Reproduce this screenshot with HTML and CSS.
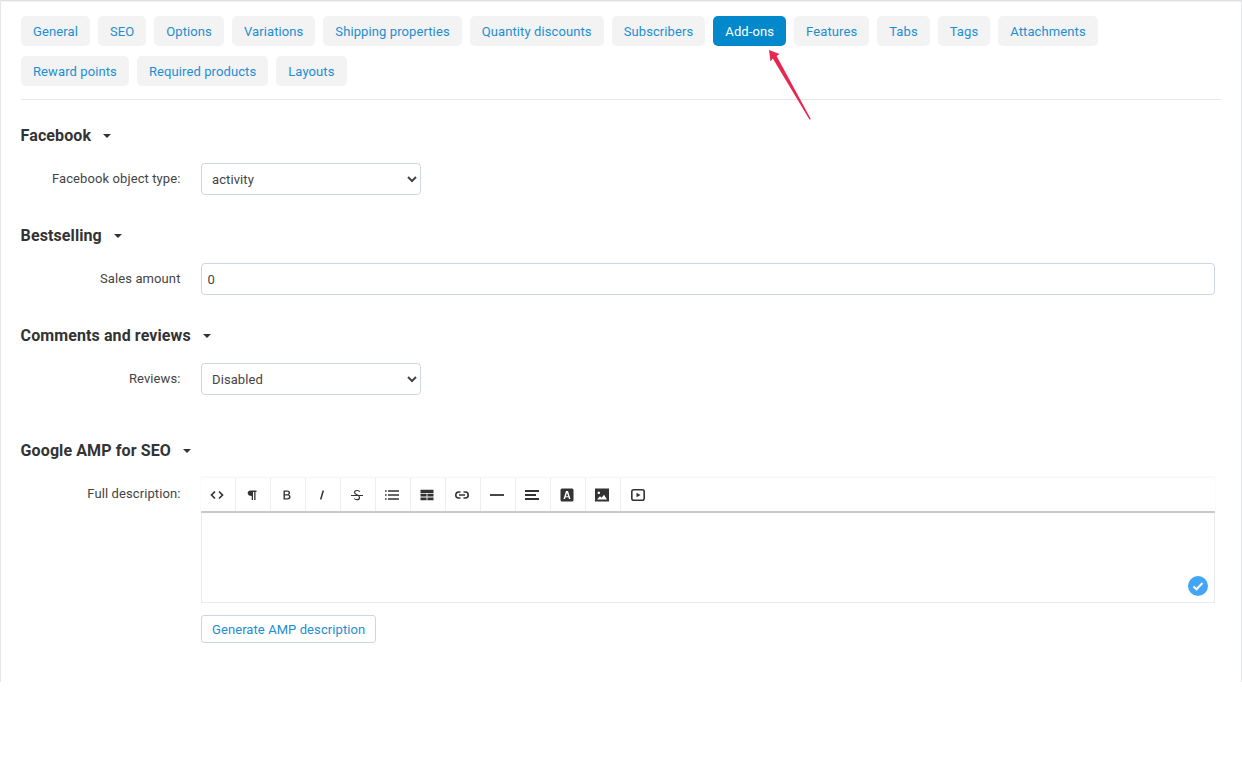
FILE: index.html
```html
<!DOCTYPE html>
<html lang="en">
<head>
<meta charset="utf-8">
<title>Product add-ons</title>
<link rel="stylesheet" href="styles.css">
</head>
<body>
<main class="panel">
  <nav class="tabs">
    <a class="tab">General</a><a class="tab">SEO</a><a class="tab">Options</a><a class="tab">Variations</a><a class="tab">Shipping properties</a><a class="tab">Quantity discounts</a><a class="tab">Subscribers</a><a class="tab active">Add-ons</a><a class="tab">Features</a><a class="tab">Tabs</a><a class="tab">Tags</a><a class="tab">Attachments</a><a class="tab">Reward points</a><a class="tab">Required products</a><a class="tab">Layouts</a>
  </nav>
  <svg class="arrow" width="50" height="76" viewBox="0 0 50 76"><path d="M0 0 L10.500 4 L7.600 6 L41.800 69 L40.600 69.800 L3.800 8.500 L1.500 11.500 Z" fill="#e8274f"/></svg>

  <section class="group first">
    <h2 class="heading">Facebook<span class="caret"></span></h2>
    <div class="row">
      <label class="label">Facebook object type:</label>
      <select class="select"><option>activity</option></select>
    </div>
  </section>

  <section class="group">
    <h2 class="heading">Bestselling<span class="caret"></span></h2>
    <div class="row">
      <label class="label">Sales amount</label>
      <input class="input" type="text" value="0">
    </div>
  </section>

  <section class="group">
    <h2 class="heading">Comments and reviews<span class="caret"></span></h2>
    <div class="row">
      <label class="label">Reviews:</label>
      <select class="select"><option>Disabled</option></select>
    </div>
  </section>

  <section class="group amp">
    <h2 class="heading">Google AMP for SEO<span class="caret"></span></h2>
    <div class="row top">
      <label class="label editor-label">Full description:</label>
      <div class="editor-wrap">
        <div class="toolbar">
          <button class="tool"><svg width="14" height="14" viewBox="0 0 14 14"><path d="M5 3.500 L1.500 7 L5 10.500 M9 3.500 L12.500 7 L9 10.500" fill="none" stroke="#333" stroke-width="1.700"/></svg></button>
          <button class="tool"><svg width="14" height="14" viewBox="0 0 14 14"><path d="M5.500 2.500 H11.500 V4 H10.500 V12 H9.200 V4 H8 V12 H6.700 V8 C4.200 8 2.700 6.800 2.700 5.200 C2.700 3.600 3.800 2.500 5.500 2.500 Z" fill="#333"/></svg></button>
          <button class="tool"><svg width="14" height="14" viewBox="0 0 14 14"><path d="M3.500 2.500 H7.500 C9.100 2.500 10 3.500 10 4.700 C10 5.700 9.500 6.400 8.800 6.700 C9.900 7 10.500 7.800 10.500 9 C10.500 10.600 9.500 11.500 7.700 11.500 H3.500 Z M4.900 3.800 V6.200 H7.300 C8.100 6.200 8.600 5.700 8.600 5 C8.600 4.300 8.100 3.800 7.300 3.800 Z M4.900 7.500 V10.200 H7.600 C8.500 10.200 9 9.700 9 8.800 C9 8 8.500 7.500 7.600 7.500 Z" fill="#333" fill-rule="evenodd"/></svg></button>
          <button class="tool"><svg width="14" height="14" viewBox="0 0 14 14"><path d="M8.300 2.500 L5.700 11.500" fill="none" stroke="#333" stroke-width="1.500"/></svg></button>
          <button class="tool"><svg width="14" height="14" viewBox="0 0 14 14"><path d="M9.800 3.800 C9.300 3 8.400 2.500 7.100 2.500 C5.600 2.500 4.600 3.300 4.600 4.500 C4.600 5.600 5.400 6.200 7 6.700 C8.600 7.200 9.500 8 9.500 9.400 C9.500 10.800 8.400 11.700 7 11.700 C5.800 11.700 4.800 11.300 4.200 10.500" fill="none" stroke="#333" stroke-width="1.200"/><path d="M1 7.500 H13" stroke="#333" stroke-width="1"/></svg></button>
          <button class="tool"><svg width="16" height="14" viewBox="0 0 16 14"><path d="M4 3 H15 M4 7 H15 M4 11 H15" stroke="#333" stroke-width="1.600"/><path d="M1 2.200 H2.600 V3.800 H1 Z M1 6.200 H2.600 V7.800 H1 Z M1 10.200 H2.600 V11.800 H1 Z" fill="#333"/></svg></button>
          <button class="tool"><svg width="14" height="14" viewBox="0 0 14 14"><path d="M0.500 1.800 H13.500 V5 H0.500 Z M0.500 5.800 H6.600 V8.600 H0.500 Z M7.400 5.800 H13.500 V8.600 H7.400 Z M0.500 9.400 H6.600 V12.200 H0.500 Z M7.400 9.400 H13.500 V12.200 H7.400 Z" fill="#333"/></svg></button>
          <button class="tool"><svg width="16" height="14" viewBox="0 0 16 14"><path d="M6.500 4 H4.500 C3 4 1.800 5.300 1.800 7 C1.800 8.700 3 10 4.500 10 H6.500 M9.500 4 H11.500 C13 4 14.200 5.300 14.200 7 C14.200 8.700 13 10 11.500 10 H9.500 M5 7 H11" fill="none" stroke="#333" stroke-width="1.600"/></svg></button>
          <button class="tool"><svg width="16" height="14" viewBox="0 0 16 14"><path d="M1 7 H15" stroke="#333" stroke-width="1.800"/></svg></button>
          <button class="tool"><svg width="16" height="14" viewBox="0 0 16 14"><path d="M1 3 H15 M1 7 H12 M1 11 H15" stroke="#333" stroke-width="1.800"/></svg></button>
          <button class="tool"><svg width="14" height="14" viewBox="0 0 14 14"><path d="M2 0.500 H12 Q13.500 0.500 13.500 2 V12 Q13.500 13.500 12 13.500 H2 Q0.500 13.500 0.500 12 V2 Q0.500 0.500 2 0.500 Z M6 3 L3.500 11 H5 L5.500 9.300 H8.500 L9 11 H10.500 L8 3 Z M7 4.800 L8.100 8.200 H5.900 Z" fill="#333" fill-rule="evenodd"/></svg></button>
          <button class="tool"><svg width="14" height="14" viewBox="0 0 14 14"><path d="M0 0.500 H14 V13.500 H0 Z M3.800 3.500 A1.300 1.300 0 1 0 3.801 3.500 Z M2 11.500 L5 8.200 L6.500 9.700 L9 6.800 L12 11.500 Z" fill="#333" fill-rule="evenodd"/></svg></button>
          <button class="tool"><svg width="14" height="14" viewBox="0 0 14 14"><rect x="0.800" y="1.800" width="12.400" height="10.400" rx="2" fill="none" stroke="#333" stroke-width="1.600"/><path d="M5.500 4.800 L9.500 7 L5.500 9.200 Z" fill="#333"/></svg></button>
        </div>
        <div class="editor">
          <span class="check"><svg width="20" height="20" viewBox="0 0 20 20"><circle cx="10" cy="10" r="10" fill="#42a5f5"/><path d="M5.500 10.500 L8.500 13.300 L14.500 7" fill="none" stroke="#fff" stroke-width="2"/></svg></span>
        </div>
        <button class="generate">Generate AMP description</button>
      </div>
    </div>
  </section>
</main>
</body>
</html>
```
FILE: styles.css
```css
* { box-sizing: border-box; }
html, body { margin: 0; background: #fff; }
body { font-family: Roboto, sans-serif; font-size: 13px; color: #333; }
.panel {
  position: relative;
  height: 682px;
  padding: 16px 20px 0;
  border-left: 1px solid #e4e7ea;
  border-right: 1px solid #e4e7ea;
  box-shadow: inset 0 2px 2px -1px #d4d4d4;
}
.tabs {
  display: flex;
  flex-wrap: wrap;
  gap: 10px 8px;
  padding-right: 40px;
  padding-bottom: 13px;
  border-bottom: 1px solid #e4e7ea;
}
.tab {
  height: 30px;
  line-height: 31px;
  padding: 0 12px;
  background: #f3f3f4;
  border-radius: 5px;
  color: #1d8ed1;
  letter-spacing: 0.1px;
}
.tab.active { background: #0388cc; color: #fff; }
.arrow { position: absolute; left: 768px; top: 50px; }
.group { margin-top: 28px; }
.group.first { margin-top: 23px; }
.group.amp { margin-top: 43px; }
.heading {
  display: flex;
  align-items: center;
  margin: 0 0 0 -0.400px;
  height: 24px;
  font-size: 16px;
  font-weight: 700;
  letter-spacing: 0.1px;
  color: #333;
}
.caret {
  margin-left: 12px;
  margin-top: 2px;
  border-left: 4.500px solid transparent;
  border-right: 4.500px solid transparent;
  border-top: 4.500px solid #333;
}
.row { display: flex; align-items: center; margin-top: 16px; gap: 20px; }
.row.top { align-items: flex-start; }
.label {
  flex: 0 0 160px;
  padding-right: 0.500px;
  text-align: right;
  color: #444;
  line-height: 30px;
  letter-spacing: 0.1px;
}
.editor-label { padding-top: 1px; }
.select, .input {
  height: 32px;
  font-family: Roboto, sans-serif;
  font-size: 13px;
  color: #444;
  background: #fff;
  border: 1px solid #ccd6e0;
  border-radius: 4px;
  letter-spacing: 0.1px;
}
.select { width: 220px; padding: 0 6px; }
.input { flex: 1; padding: 0 5.500px; margin-right: 6px; outline: none; }
.editor-wrap { flex: 1; margin-right: 6px; }
.toolbar {
  display: flex;
  height: 35px;
  border-bottom: 2px solid #c9c9c9;
  box-shadow: 0 -1px 2px #f2f2f2;
}
.tool {
  display: flex;
  align-items: center;
  justify-content: center;
  width: 35px;
  height: 100%;
  padding: 0 2px 0 0;
  background: #fff;
  border: 0;
  border-right: 1px solid #eee;
}
.tool:last-child { border-right: 0; }
.editor {
  position: relative;
  height: 90px;
  border: 1px solid #e8eaec;
  border-top: 0;
}
.check { position: absolute; right: 6px; bottom: 6px; display: flex; }
.generate {
  display: block;
  height: 28px;
  margin-top: 12px;
  padding: 0 10px;
  background: #fff;
  border: 1px solid #ccd6e0;
  border-radius: 3px;
  color: #1d8ed1;
  font-family: Roboto, sans-serif;
  font-size: 13px;
  letter-spacing: 0.08px;
}
```
